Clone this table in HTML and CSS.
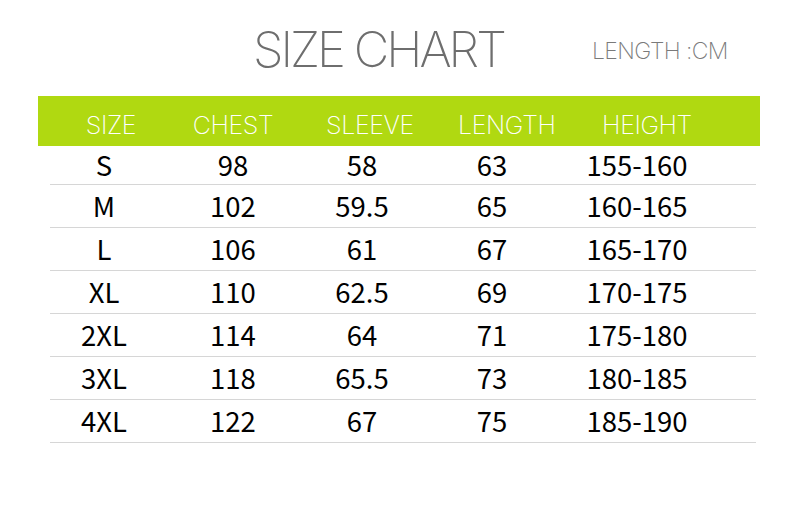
FILE: index.html
```
<!DOCTYPE html>
<html>
<head>
<meta charset="utf-8">
<link rel="stylesheet" href="styles.css">
</head>
<body>
<div class="page">
  <div class="title-row">
    <h1 class="title">SIZE CHART</h1>
    <div class="unit">LENGTH :CM</div>
  </div>
  <div class="head">
    <div>SIZE</div><div>CHEST</div><div>SLEEVE</div><div>LENGTH</div><div>HEIGHT</div>
  </div>
  <div class="body">
    <div class="row first"><div>S</div><div>98</div><div>58</div><div>63</div><div>155-160</div></div>
    <div class="row"><div>M</div><div>102</div><div>59.5</div><div>65</div><div>160-165</div></div>
    <div class="row"><div>L</div><div>106</div><div>61</div><div>67</div><div>165-170</div></div>
    <div class="row"><div>XL</div><div>110</div><div>62.5</div><div>69</div><div>170-175</div></div>
    <div class="row"><div>2XL</div><div>114</div><div>64</div><div>71</div><div>175-180</div></div>
    <div class="row"><div>3XL</div><div>118</div><div>65.5</div><div>73</div><div>180-185</div></div>
    <div class="row"><div>4XL</div><div>122</div><div>67</div><div>75</div><div>185-190</div></div>
  </div>
</div>
</body>
</html>
```
FILE: styles.css
```
html, body {
  margin: 0;
  padding: 0;
  background: #fff;
}
.page {
  width: 800px;
  height: 507px;
  overflow: hidden;
}
.title-row {
  display: flex;
  align-items: flex-start;
  height: 96px;
  box-sizing: border-box;
  padding-left: 253px;
}
.title {
  margin: 0;
  margin-top: 22px;
  font-family: Inter, "Liberation Sans", sans-serif;
  font-weight: 200;
  font-size: 49px;
  line-height: 56px;
  letter-spacing: -3px;
  color: #6e6e6e;
}
.unit {
  margin-left: 88px;
  margin-top: 37px;
  font-family: Inter, "Liberation Sans", sans-serif;
  font-weight: 200;
  font-size: 23px;
  line-height: 28px;
  letter-spacing: -0.6px;
  color: #7a7a7a;
}
.head {
  margin-left: 38px;
  width: 722px;
  height: 50px;
  background: #b0d911;
  display: grid;
  grid-template-columns: 146px 98px 176px 86px 206px;
  align-items: center;
  font-family: Inter, "Liberation Sans", sans-serif;
  font-weight: 200;
  font-size: 25px;
  letter-spacing: -0.4px;
  color: #fff;
}
.head div {
  text-align: center;
  padding-top: 8px;
}
.body {
  margin-left: 50px;
  width: 706px;
}
.row {
  display: grid;
  grid-template-columns: 108px 150px 108px 152px 138px;
  height: 43px;
  align-items: center;
  border-bottom: 1px solid #d6d6d6;
  box-sizing: border-box;
  font-family: "Noto Sans CJK SC", "Noto Sans", sans-serif;
  font-size: 27.5px;
  color: #000;
}
.row.first {
  height: 39px;
}
.row div {
  text-align: center;
  line-height: 30px;
  padding-bottom: 2px;
}
```
